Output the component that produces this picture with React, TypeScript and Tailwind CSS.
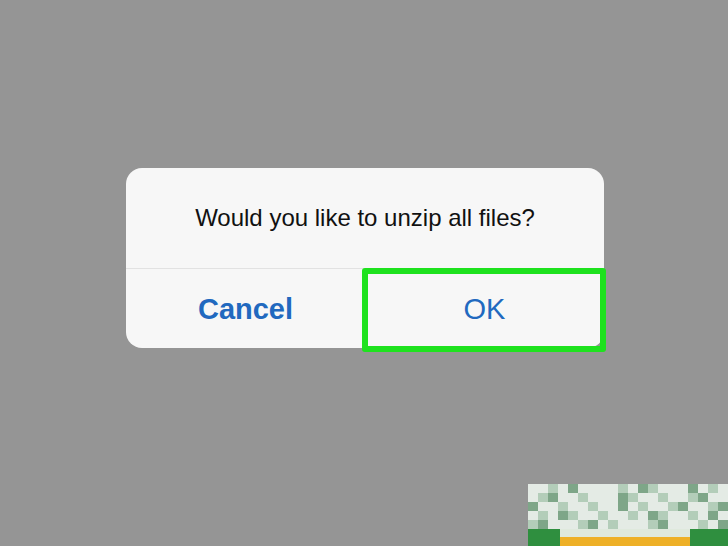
import React from "react";

const pixels = [
  "LLMLDLLLLMLDMLLLDLML",
  "LMDLLMLLLDMLLMLLMDLL",
  "DLLMLLMLLDLMLLMDLLMD",
  "LMLDMLLMLLMLDMLLMLDL",
  "MDLLLMDLMLLLMDLLLMLD",
];

const tone: Record<string, string> = {
  L: "bg-[#e4ebe5]",
  M: "bg-[#b3cdb9]",
  D: "bg-[#7ea688]",
};

export default function App() {
  return (
    <div className="relative w-[728px] h-[546px] bg-[#959595] overflow-hidden font-['Liberation_Sans',Arial,sans-serif]">
      <div className="pt-[168px] pl-[126px]">
        {/* Alert */}
        <div className="w-[478px] h-[180px] rounded-[16px] bg-[#f7f7f7] flex flex-col overflow-hidden">
          <div className="h-[100px] flex items-center justify-center text-[24px] text-[#111]">
            Would you like to unzip all files?
          </div>
          <div className="h-px bg-[#e2e2e2]"></div>
          <div className="flex-1 flex pt-[2px]">
            <button className="flex-1 flex items-center justify-center text-[29px] font-bold text-[#2169bf]">
              Cancel
            </button>
            <button className="flex-1 flex items-center justify-center text-[29px] text-[#2169bf]">
              OK
            </button>
          </div>
        </div>
      </div>

      {/* Highlight */}
      <div className="absolute left-[362px] top-[268px] w-[244px] h-[84px] border-[6px] border-[#1ee21e] rounded-[3px]"></div>

      {/* Watermark */}
      <div className="absolute left-[528px] top-[484px] w-[200px] h-[62px] flex flex-col">
        {pixels.map((row, r) => (
          <div key={r} className="flex h-[9px]">
            {row.split("").map((c, i) => (
              <div key={i} className={"w-[10px] h-[9px] " + tone[c]}></div>
            ))}
          </div>
        ))}
        <div className="flex h-[17px]">
          <div className="w-[32px] bg-[#2f8f3f]"></div>
          <div className="flex-1 flex flex-col">
            <div className="h-[8px] bg-[#dfe9dd]"></div>
            <div className="flex-1 bg-[#eeb027]"></div>
          </div>
          <div className="w-[38px] bg-[#2f8f3f]"></div>
        </div>
      </div>
    </div>
  );
}
